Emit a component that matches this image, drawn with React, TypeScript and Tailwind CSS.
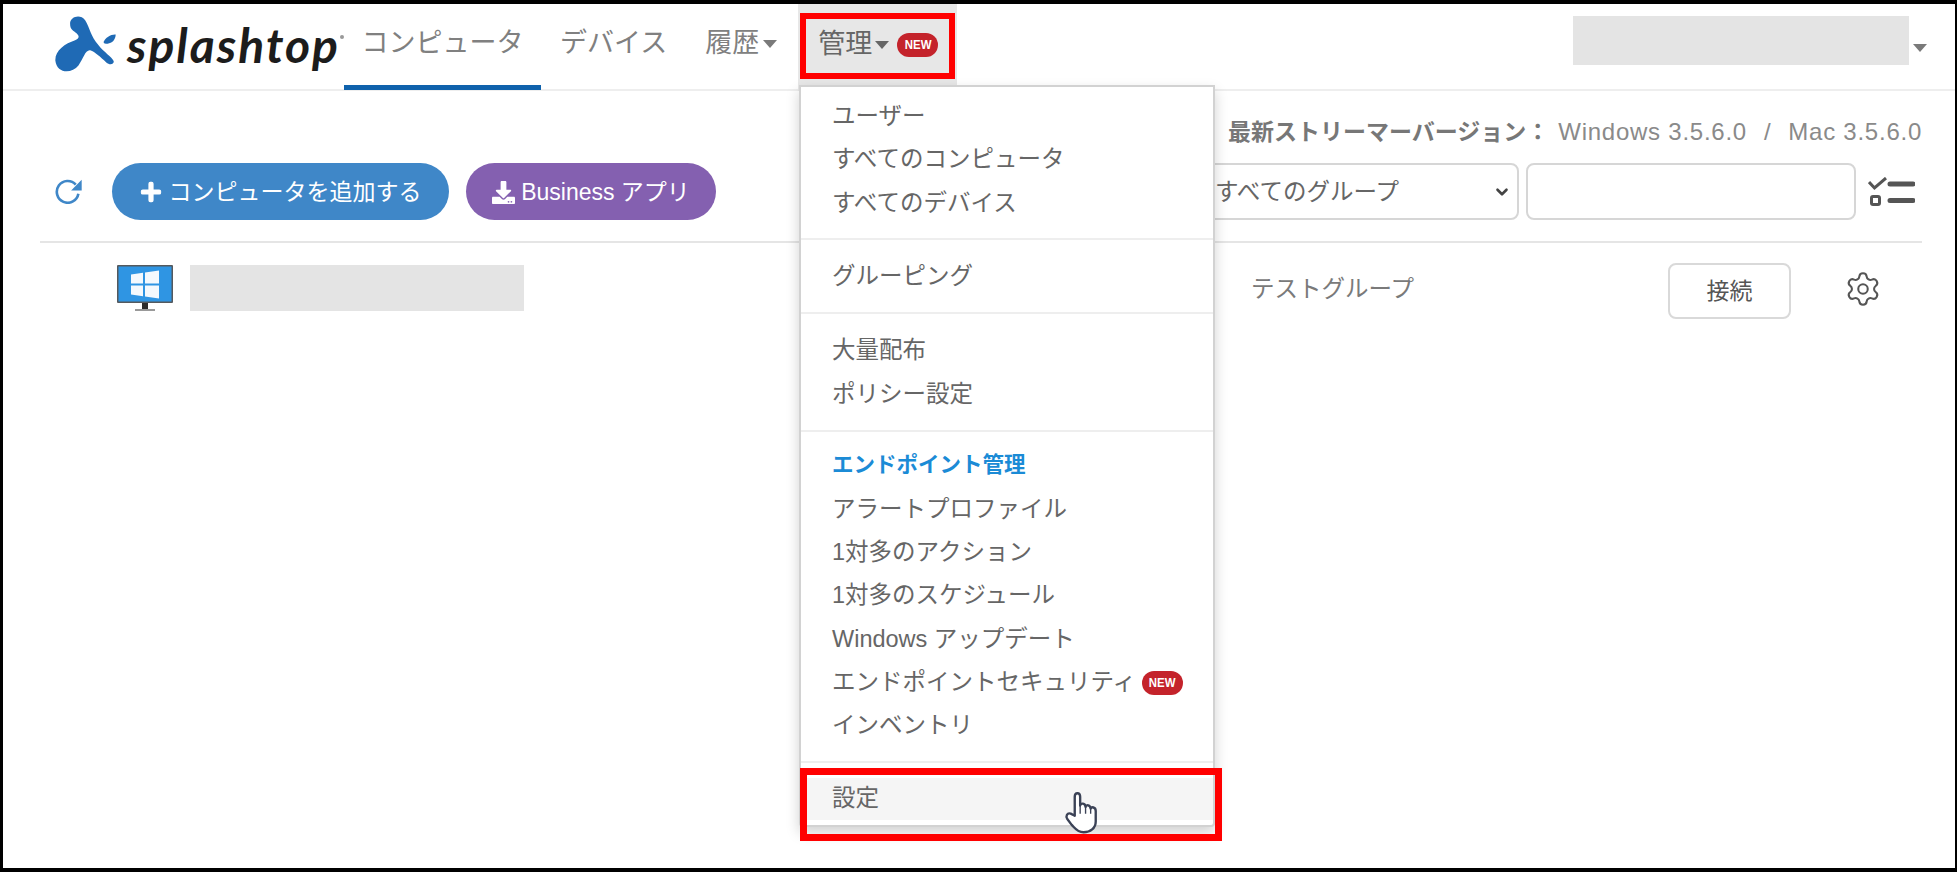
import { FaPlus, FaDownload } from "react-icons/fa";
import { Settings, ChevronDown } from "lucide-react";

const font = { fontFamily: '"Liberation Sans", "Noto Sans CJK JP", sans-serif' };

function Caret({ color = "border-t-[#7a7a7a]" }: { color?: string }) {
  return <span className={`inline-block w-0 h-0 border-x-[7px] border-t-[8px] border-x-transparent ${color}`} />;
}

function NewBadge() {
  return (
    <span className="inline-flex items-center justify-center w-[41px] h-[24px] rounded-[12px] bg-[#c4232b] text-white text-[13px] font-bold">
      <span className="inline-block scale-x-[0.88]">NEW</span>
    </span>
  );
}

function Logo() {
  return (
    <div className="flex items-start w-[341px] pl-[52px] h-full pt-[11px]">
      <svg width="62" height="58" viewBox="45 45 185 172" className="shrink-0">
        <path
          fill="#1f6ab5"
          d="M90 70C90 50 120 40 135 60C150 85 150 105 175 135C190 155 215 170 220 182C222 192 208 195 198 186C180 170 165 155 150 150C135 148 130 175 115 195C95 220 50 220 46 180C45 150 75 130 105 120C115 115 120 110 110 100C100 90 90 90 90 70Z"
        />
        <path fill="#1f6ab5" d="M190 125C195 112 212 102 226 103C226 118 215 130 202 130C195 130 190 130 190 125Z" />
      </svg>
      <span className="ml-[10px] mt-[4px] text-[48px] leading-[52px] font-bold italic text-[#1c1c1c] tracking-[2px]" style={{ fontFamily: "Lato, sans-serif" }}>
        splashtop
      </span>
      <span className="mt-[20px] w-[4px] h-[4px] rounded-full bg-[#999]" />
    </div>
  );
}

function Item({ children }: { children: React.ReactNode }) {
  return <div className="h-[43.3px] flex items-center gap-[6px] pl-[31px] text-[23.5px] text-[#666]">{children}</div>;
}

function Sep({ mt, mb }: { mt: string; mb: string }) {
  return <div className={`h-[2px] bg-[#eeeeee] ${mt} ${mb}`} />;
}

function Menu() {
  return (
    <div className="absolute left-[796px] top-[81px] w-[416px] h-[742px] bg-white border-2 border-[#d2d2d2] rounded-b-[4px] shadow-[0_6px_14px_rgba(0,0,0,0.18)] pt-[8px] z-10">
      <Item>ユーザー</Item>
      <Item>すべてのコンピュータ</Item>
      <Item>すべてのデバイス</Item>
      <Sep mt="mt-[13px]" mb="mb-[15px]" />
      <Item>グルーピング</Item>
      <Sep mt="mt-[14px]" mb="mb-[15px]" />
      <Item>大量配布</Item>
      <Item>ポリシー設定</Item>
      <Sep mt="mt-[14px]" mb="mb-[11px]" />
      <div className="h-[45px] flex items-center pl-[31px] text-[21.5px] font-bold text-[#1b8bd6]">エンドポイント管理</div>
      <Item>アラートプロファイル</Item>
      <Item>1対多のアクション</Item>
      <Item>1対多のスケジュール</Item>
      <Item>Windows アップデート</Item>
      <Item>
        エンドポイントセキュリティ
        <NewBadge />
      </Item>
      <Item>インベントリ</Item>
      <Sep mt="mt-[13px]" mb="mb-[15px]" />
      <div className="h-[42px] flex items-center pl-[31px] text-[23.5px] text-[#666] bg-[#f5f5f5]">設定</div>
    </div>
  );
}

function Monitor() {
  return (
    <svg width="56" height="47" viewBox="0 0 56 47" className="shrink-0">
      <rect x="0" y="0" width="56" height="38" rx="1" fill="#55595d" />
      <rect x="1.5" y="1.5" width="53" height="35" fill="#2f95e3" />
      <path fill="#f4f9fd" d="M14 9.5l12-1.7v10.7H14zM28 7.5l14-2v13H28zM14 20.5h12v10.7l-12-1.7zM28 20.5h14v13l-14-2z" />
      <rect x="25" y="38" width="6" height="6" fill="#2b2b2b" />
      <rect x="18" y="44" width="20" height="2" fill="#999" />
    </svg>
  );
}

function Refresh() {
  return (
    <svg width="27" height="25" viewBox="30 33 80 76" className="text-[#3f87c8]">
      <path d="M92 50A33 33 0 1 0 100 78" fill="none" stroke="currentColor" strokeWidth="8" />
      <path d="M110 35V68H78Z" fill="currentColor" />
    </svg>
  );
}

function Hand() {
  return (
    <svg width="36" height="44" viewBox="70 65 105 130" className="absolute left-[1060px] top-[787px] z-30">
      <path
        fill="#fff"
        stroke="#3b4256"
        strokeWidth="7"
        strokeLinejoin="round"
        d="M104 138L104 82C104 68 120 68 120 82L120 108C122 100 135 100 136 112C138 104 150 106 151 117C153 111 166 112 166 124L166 155C166 175 150 187 130 187C112 187 105 175 95 165L82 148C76 140 82 128 92 132Z"
      />
      <path stroke="#3b4256" strokeWidth="4" d="M120 108V132M136 112V132M151 117V132" />
    </svg>
  );
}

export default function App() {
  return (
    <div className="relative w-[1957px] h-[872px] overflow-hidden bg-white border-t-[4px] border-b-[4px] border-l-[3px] border-r-[2px] border-black flex flex-col" style={font}>
      <header className="h-[87px] shrink-0 border-b-2 border-[#eeeeee] flex items-stretch">
        <Logo />
        <nav className="flex items-stretch text-[27px] text-[#808080]">
          <div className="w-[197px] flex items-center justify-center border-b-[5px] border-[#0f62ac] -mb-[1px] pb-[2px]">コンピュータ</div>
          <div className="px-[19px] flex items-center pb-[6px]">デバイス</div>
          <div className="pl-[19px] pr-[21px] flex items-center gap-[4px] pb-[6px]">
            履歴
            <Caret />
          </div>
          <div className="pl-[20px] pr-[19px] flex items-center bg-[#e7e7e7] text-[#666] pb-[6px] -mb-[2px]">
            管理
            <span className="ml-[3px] flex">
              <Caret color="border-t-[#666]" />
            </span>
            <span className="ml-[8px] flex">
              <NewBadge />
            </span>
          </div>
        </nav>
        <div className="ml-auto flex items-start pt-[12px] pr-[28px]">
          <div className="w-[336px] h-[49px] bg-[#e4e4e4]" />
          <span className="ml-[4px] mt-[28px] flex">
            <Caret />
          </span>
        </div>
      </header>

      <main className="flex-1 pl-[37px] pr-[33px]">
        <div className="h-[152px] border-b-2 border-[#e5e5e5] flex justify-between items-end pb-[21px]">
          <div className="flex items-center">
            <span className="ml-[15px]">
              <Refresh />
            </span>
            <button className="ml-[30px] h-[57px] w-[337px] pt-[1px] rounded-full bg-[#3f87c8] text-white text-[23px] flex items-center justify-center gap-[7px]">
              <FaPlus size={22} stroke="currentColor" strokeWidth={24} />
              コンピュータを追加する
            </button>
            <button className="ml-[17px] h-[57px] w-[250px] pt-[1px] rounded-full bg-[#8460b0] text-white text-[23px] flex items-center justify-center gap-[6px]">
              <FaDownload size={23} />
              Business アプリ
            </button>
          </div>
          <div className="flex flex-col items-end">
            <div className="flex items-center text-[24px] leading-[28px] text-[#8a8a8a] tracking-[0.75px] mb-[17px]">
              <span className="text-[23px] tracking-normal font-bold text-[#777] mr-[9px]">最新ストリーマーバージョン：</span>
              Windows 3.5.6.0
              <span className="mx-[17px]">/</span>
              Mac 3.5.6.0
            </div>
            <div className="flex items-center">
              <div className="relative flex">
                <select className="w-[329px] h-[57px] pl-[23px] pr-[6px] pt-[3px] appearance-none border-2 border-[#d6d6d6] rounded-[8px] text-[23.5px] text-[#666] bg-white">
                  <option>すべてのグループ</option>
                </select>
                <ChevronDown size={18} strokeWidth={3.5} className="absolute right-[8px] top-[20px] text-[#444]" />
              </div>
              <input className="ml-[7px] w-[330px] h-[57px] border-2 border-[#d6d6d6] rounded-[8px] bg-white" />
              <svg width="47" height="30" viewBox="0 0 47 30" className="ml-[12px] mr-[7px]" fill="none" stroke="#555">
                <path d="M1 5l5.5 6L18 1" strokeWidth="3" />
                <rect x="3.5" y="19.5" width="8" height="8" rx="1.5" strokeWidth="3" />
                <path d="M22 7h23M22 23.5h23" strokeWidth="5" strokeLinecap="round" />
              </svg>
            </div>
          </div>
        </div>
        <div className="flex items-start pl-[77px] pt-[22px]">
          <Monitor />
          <div className="ml-[17px] w-[334px] h-[46px] bg-[#e4e4e4] shrink-0" />
          <div className="ml-[727px] w-[417px] h-[46px] pt-[4px] flex items-center text-[23.5px] text-[#7a7a7a] shrink-0">テストグループ</div>
          <button className="w-[123px] h-[56px] -mt-[2px] border-2 border-[#d9d9d9] rounded-[8px] text-[23px] text-[#555] bg-white shrink-0">接続</button>
          <span className="ml-[53px] mt-[5px] text-[#555]">
            <Settings size={38} strokeWidth={1.3} />
          </span>
        </div>
      </main>

      <Menu />
      <div className="absolute left-[797px] top-[9px] w-[155px] h-[66px] border-[6px] border-[#ff0000] z-20" />
      <div className="absolute left-[797px] top-[764px] w-[422px] h-[73px] border-[7px] border-[#ff0000] z-20" />
      <Hand />
    </div>
  );
}
